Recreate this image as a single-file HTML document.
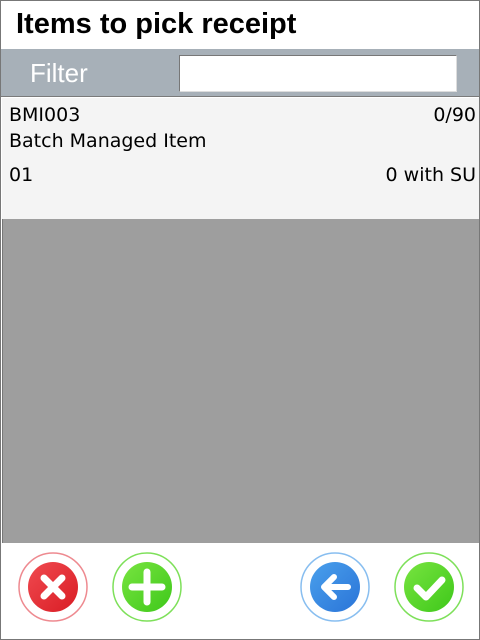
<!DOCTYPE html>
<html><head><style>
*{margin:0;padding:0;box-sizing:border-box}
body{width:480px;height:640px;overflow:hidden;background:#fff;font-family:"Liberation Sans",sans-serif;position:relative}
.frame{position:absolute;inset:0;border:1px solid #777;pointer-events:none;z-index:5}
.title{position:absolute;left:16px;top:8px;font-size:29px;font-weight:bold;color:#000}
.fbar{position:absolute;left:0;top:49px;width:480px;height:48px;background:#a7b0b8;border-bottom:1px solid #7a7a7a}
.flabel{position:absolute;left:30px;top:9px;font-size:26px;color:#fff}
.finput{position:absolute;left:179px;top:6px;width:278px;height:37px;background:#fff;border:1px solid #777;border-right-color:#ddd;border-bottom-color:#ddd}
.list{position:absolute;left:2px;top:98px;width:477px;height:121px;background:#f4f4f4;font-family:"DejaVu Sans",sans-serif;font-size:19px;color:#000}
.list div{position:absolute}
.gray{position:absolute;left:2px;top:219px;width:477px;height:324px;background:#9e9e9e;border-left:1px solid #777}
</style></head><body>
<div class="title">Items to pick receipt</div>
<div class="fbar"><div class="flabel">Filter</div><div class="finput"></div></div>
<div class="list">
<div style="left:7px;top:6px">BMI003</div>
<div style="right:3px;top:6px">0/90</div>
<div style="left:7px;top:32px">Batch Managed Item</div>
<div style="left:7px;top:66px">01</div>
<div style="right:3px;top:66px">0 with SU</div>
</div>
<div class="gray"></div>
<svg width="480" height="97" style="position:absolute;left:0;top:543px">
<defs>
<linearGradient id="r" x1="0" y1="0" x2="1" y2="1"><stop offset="0" stop-color="#f04a50"/><stop offset="1" stop-color="#d91c24"/></linearGradient>
<linearGradient id="g" x1="0" y1="0" x2="1" y2="1"><stop offset="0" stop-color="#78e440"/><stop offset="1" stop-color="#3ec81a"/></linearGradient>
<linearGradient id="b" x1="0" y1="0" x2="1" y2="1"><stop offset="0" stop-color="#4aa0ec"/><stop offset="1" stop-color="#2a74d8"/></linearGradient>
</defs>
<g transform="translate(53,44)"><circle r="34" fill="#fff" stroke="#ee8a90" stroke-width="1.5"/><circle r="25" fill="url(#r)"/><path d="M-9,-9L9,9M9,-9L-9,9" stroke="#fff" stroke-width="7" stroke-linecap="round"/></g>
<g transform="translate(147,44)"><circle r="34" fill="#fff" stroke="#7ee05a" stroke-width="1.5"/><circle r="25" fill="url(#g)"/><path d="M0,-15V15M-15,0H15" stroke="#fff" stroke-width="7" stroke-linecap="round"/></g>
<g transform="translate(335,44)"><circle r="34" fill="#fff" stroke="#88bef0" stroke-width="1.5"/><circle r="25" fill="url(#b)"/><path d="M13,0H-10M-1,-10L-11,0L-1,10" stroke="#fff" stroke-width="6" stroke-linecap="round" stroke-linejoin="round" fill="none"/></g>
<g transform="translate(429,44)"><circle r="34" fill="#fff" stroke="#7ee05a" stroke-width="1.5"/><circle r="25" fill="url(#g)"/><path d="M-12,1L-3,10L13,-7" stroke="#fff" stroke-width="7" stroke-linecap="round" stroke-linejoin="round" fill="none"/></g>
</svg>
<div class="frame"></div>
</body></html>
